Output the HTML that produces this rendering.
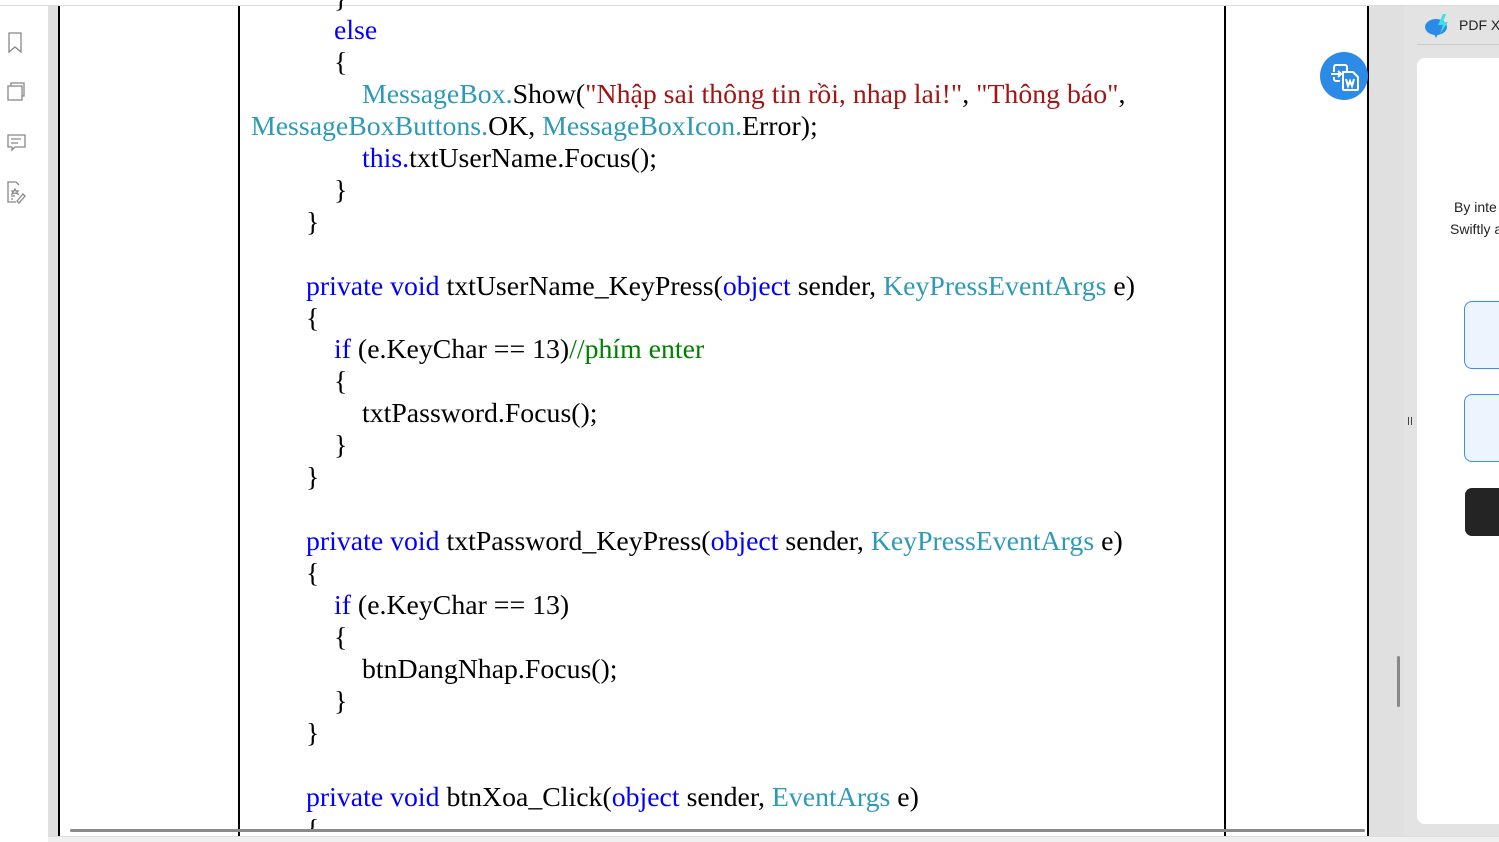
<!DOCTYPE html>
<html><head><meta charset="utf-8"><style>
*{margin:0;padding:0;box-sizing:border-box}
body{width:1499px;height:842px;position:relative;overflow:hidden;background:#fff;font-family:"Liberation Serif",serif}
.a{position:absolute}
.n{white-space:nowrap}
.l{position:absolute;font-size:27.8px;line-height:32px;white-space:pre;color:#000}
.k{color:#0000ff}.t{color:#2e9ab8}.s{color:#a31515}.c{color:#008000}
</style></head><body>
<div class="a" style="left:0;top:0;width:1499px;height:6px;background:#fff;border-bottom:1px solid #dcdcdc"></div>
<div class="a" style="top:6px;left:48px;width:10px;height:836px;background:#e0e0e0"></div>
<div class="a" style="left:58px;top:6px;width:2px;height:830px;background:#000"></div>
<div class="a" style="left:238px;top:6px;width:2px;height:830px;background:#000"></div>
<div class="a" style="left:1224px;top:6px;width:2px;height:830px;background:#000"></div>
<div class="a" style="left:1367px;top:6px;width:2px;height:830px;background:#000"></div>
<div class="a" style="left:1369px;top:6px;width:130px;height:836px;background:#e3e3e3"></div>
<div class="a" style="left:1369px;top:6px;width:35px;height:836px;background:#e0e0e0"></div>
<div class="a" style="left:1417px;top:58px;width:90px;height:766px;background:#fff;border-radius:8px"></div>
<div class="a" style="left:1417px;top:44px;width:82px;height:1px;background:#ccc"></div>
<div class="a n" style="left:1459px;top:17px;font:14px 'Liberation Sans',sans-serif;color:#222">PDF X</div>
<svg class="a" style="left:1423px;top:12px" width="30" height="28" viewBox="0 0 30 28"><ellipse cx="13" cy="15" rx="11" ry="8" fill="#2d8be8"/><path d="M10 20 l3 6 l3-6z" fill="#2d8be8"/><path d="M20 2 l-5 11 h5 l-3 9 l8-12 h-5 l3-8z" fill="#3de0e8"/></svg>
<div class="a n" style="left:1454px;top:199px;font:14px 'Liberation Sans',sans-serif;color:#222">By inte</div>
<div class="a n" style="left:1450px;top:221px;font:14px 'Liberation Sans',sans-serif;color:#222">Swiftly a</div>
<div class="a" style="left:1464px;top:301px;width:50px;height:68px;background:#ecf4fe;border:1px solid #3b8ff0;border-radius:8px"></div>
<div class="a" style="left:1464px;top:394px;width:50px;height:68px;background:#ecf4fe;border:1px solid #3b8ff0;border-radius:8px"></div>
<div class="a" style="left:1465px;top:488px;width:50px;height:48px;background:#242424;border-radius:7px"></div>
<div class="a" style="left:1408px;top:417px;width:1px;height:8px;background:#444;box-shadow:3px 0 0 #444"></div>
<div class="a" style="left:1397px;top:656px;width:3px;height:51px;background:#888;border-radius:2px"></div>
<div class="a" style="left:70px;top:829px;width:1295px;height:3px;background:#8a8a8a;border-radius:2px"></div>
<div class="a" style="left:48px;top:836px;width:1451px;height:6px;background:#f0f0f0;border-top:1px solid #ddd"></div>
<div class="a" style="left:1320px;top:52px;width:48px;height:48px;border-radius:50%;background:#2d8be8"></div>
<svg class="a" style="left:1320px;top:52px" width="48" height="48" viewBox="0 0 48 48" fill="none" stroke="#fff" stroke-width="2"><path d="M14 20 v-5 a2 2 0 0 1 2-2 h9 a2 2 0 0 1 2 2 v4"/><path d="M11 22 h10 M18 19 l3 3 -3 3"/><path d="M14 25 v2 a2 2 0 0 0 2 2 h4"/><path d="M23 20 h10 l5 5 v12 a1 1 0 0 1 -1 1 h-13 a1 1 0 0 1 -1 -1z"/><path d="M26 27 l2 7 2-5 2 5 2-7"/></svg>
<svg class="a" style="left:5px;top:31px" width="22" height="180" viewBox="0 0 22 180" fill="none" stroke="#888" stroke-width="1.3"><path d="M4 2 h12 v19 l-6-5 -6 5z"/><rect x="3" y="55" width="14" height="14"/><path d="M6 55 v-3 h13 v13 h-2"/><path d="M3 104 h17 v12 h-10 l-3 3 v-3 h-4z M6 108 h10 M6 112 h7"/><path d="M14 154 l-3-3 h-8 v20 h8 M6 165 h4 M6 168 h2 M12 170 l6-7 2 2 -6 7z M10 158 l1 2 h2 l-1 1 l1 2 -3-1 -3 1 1-2 -1-1 h2z"/></svg>
<div class="l" style="left:334px;top:-17px">}</div>
<div class="l k" style="left:334px;top:15px">else</div>
<div class="l" style="left:334px;top:47px">{</div>
<div class="l" style="left:362px;top:79px"><span class="t">MessageBox.</span>Show(<span class="s">"Nhập sai thông tin rồi, nhap lai!"</span>, <span class="s">"Thông báo"</span>,</div>
<div class="l" style="left:251px;top:111px"><span class="t">MessageBoxButtons.</span>OK, <span class="t">MessageBoxIcon.</span>Error);</div>
<div class="l" style="left:362px;top:143px"><span class="k">this.</span>txtUserName.Focus();</div>
<div class="l" style="left:334px;top:175px">}</div>
<div class="l" style="left:306px;top:207px">}</div>
<div class="l" style="left:306px;top:271px"><span class="k">private void</span> txtUserName_KeyPress(<span class="k">object</span> sender, <span class="t">KeyPressEventArgs</span> e)</div>
<div class="l" style="left:306px;top:303px">{</div>
<div class="l" style="left:334px;top:334px"><span class="k">if</span> (e.KeyChar == 13)<span class="c">//phím enter</span></div>
<div class="l" style="left:334px;top:366px">{</div>
<div class="l" style="left:362px;top:398px">txtPassword.Focus();</div>
<div class="l" style="left:334px;top:430px">}</div>
<div class="l" style="left:306px;top:462px">}</div>
<div class="l" style="left:306px;top:526px"><span class="k">private void</span> txtPassword_KeyPress(<span class="k">object</span> sender, <span class="t">KeyPressEventArgs</span> e)</div>
<div class="l" style="left:306px;top:558px">{</div>
<div class="l" style="left:334px;top:590px"><span class="k">if</span> (e.KeyChar == 13)</div>
<div class="l" style="left:334px;top:622px">{</div>
<div class="l" style="left:362px;top:654px">btnDangNhap.Focus();</div>
<div class="l" style="left:334px;top:686px">}</div>
<div class="l" style="left:306px;top:718px">}</div>
<div class="l" style="left:306px;top:782px"><span class="k">private void</span> btnXoa_Click(<span class="k">object</span> sender, <span class="t">EventArgs</span> e)</div>
<div class="l" style="left:306px;top:814px;height:15px;overflow:hidden">{</div>
</body></html>
